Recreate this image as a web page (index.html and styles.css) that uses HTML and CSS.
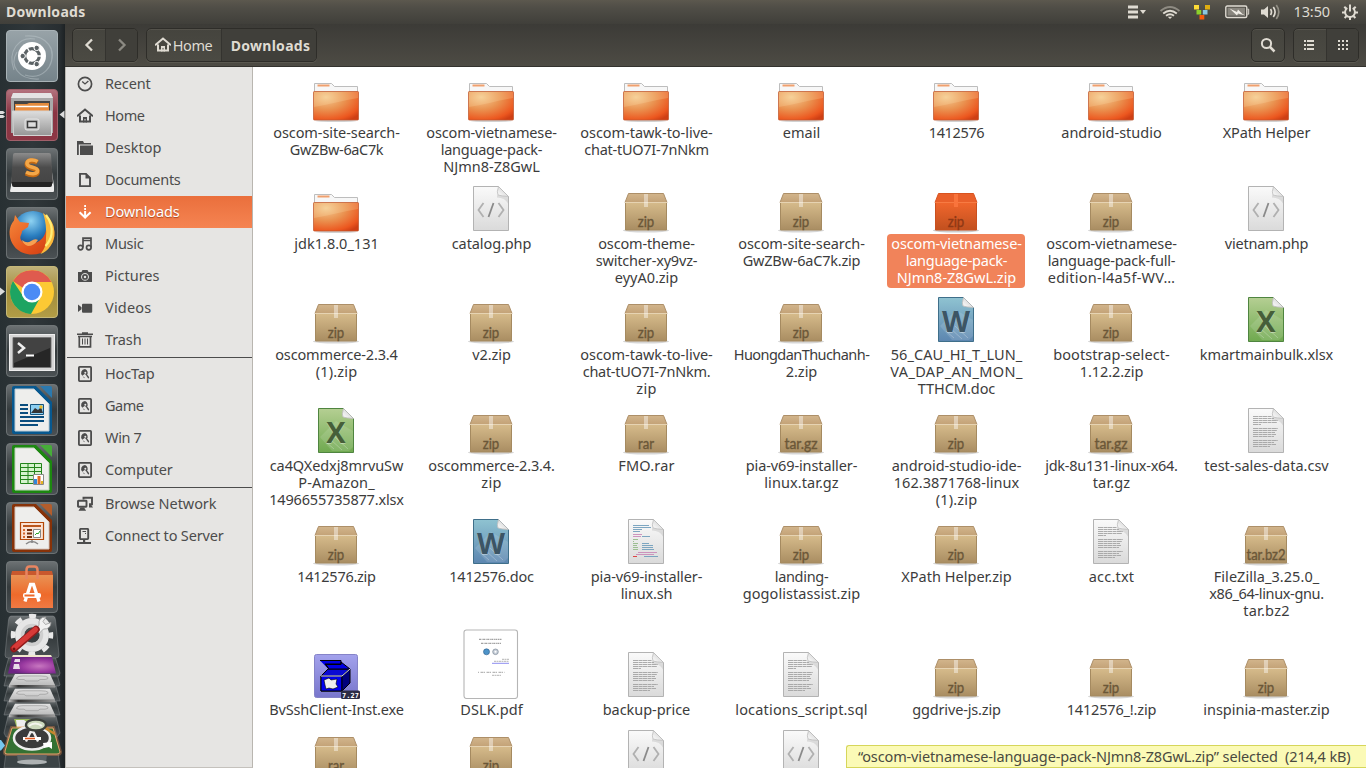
FILE: index.html
```html
<!DOCTYPE html>
<html lang="en">
<head>
<meta charset="utf-8">
<title>Downloads</title>
<link rel="stylesheet" href="styles.css">
</head>
<body>
<svg class="defs" aria-hidden="true">
  <defs>
    <linearGradient id="gTile" x1="0" y1="0" x2="0" y2="1"><stop offset="0" stop-color="#6d7274"/><stop offset=".28" stop-color="#4a5052"/><stop offset=".5" stop-color="#353b3d"/><stop offset="1" stop-color="#4b5154"/></linearGradient>
    <linearGradient id="gDash" x1="0" y1="0" x2="0" y2="1"><stop offset="0" stop-color="#98a3a8"/><stop offset="1" stop-color="#75838a"/></linearGradient>
    <linearGradient id="gRed" x1="0" y1="0" x2="0" y2="1"><stop offset="0" stop-color="#b4747f"/><stop offset=".45" stop-color="#8a3543"/><stop offset="1" stop-color="#8c3644"/></linearGradient>
    <linearGradient id="gGold" x1="0" y1="0" x2="0" y2="1"><stop offset="0" stop-color="#c0b27a"/><stop offset=".5" stop-color="#a28d3c"/><stop offset="1" stop-color="#b29d46"/></linearGradient>
    <linearGradient id="gMetal" x1="0" y1="0" x2="0" y2="1"><stop offset="0" stop-color="#dedede"/><stop offset="1" stop-color="#969696"/></linearGradient>
    <linearGradient id="gKey" x1="0" y1="0" x2="0" y2="1"><stop offset="0" stop-color="#8c8c8c"/><stop offset=".45" stop-color="#4c4c4c"/><stop offset="1" stop-color="#444"/></linearGradient>
    <linearGradient id="gDisk" x1="0" y1="0" x2="0" y2="1"><stop offset="0" stop-color="#e2e2e2"/><stop offset="1" stop-color="#bcbcbc"/></linearGradient>
    <linearGradient id="gEdge" x1="0" y1="0" x2="1" y2="0"><stop offset="0" stop-color="#bbb"/><stop offset=".2" stop-color="#333"/><stop offset=".5" stop-color="#555"/><stop offset="1" stop-color="#999"/></linearGradient>
    <radialGradient id="gGlobe" cx=".45" cy=".25" r=".75"><stop offset="0" stop-color="#8fd3f2"/><stop offset=".5" stop-color="#2b7fc0"/><stop offset="1" stop-color="#0b2c66"/></radialGradient>
    <linearGradient id="gFox" x1="0" y1="0" x2="1" y2="1"><stop offset="0" stop-color="#f58a3c"/><stop offset=".6" stop-color="#e4551d"/><stop offset="1" stop-color="#c93a12"/></linearGradient>
    <linearGradient id="gBag" x1="0" y1="0" x2="0" y2="1"><stop offset="0" stop-color="#e99254"/><stop offset=".6" stop-color="#ee6a2b"/><stop offset="1" stop-color="#f07a44"/></linearGradient>
    <linearGradient id="gPaper" x1="0" y1="0" x2="0" y2="1"><stop offset="0" stop-color="#fafafa"/><stop offset="1" stop-color="#dadada"/></linearGradient>
    <linearGradient id="gFold" x1="0" y1="1" x2="1" y2="0"><stop offset="0" stop-color="#fff"/><stop offset=".6" stop-color="#ddd"/><stop offset="1" stop-color="#bbb"/></linearGradient>
    <radialGradient id="gFolder" cx=".28" cy=".2" r=".95"><stop offset="0" stop-color="#f4cb92"/><stop offset=".45" stop-color="#ea9351"/><stop offset=".85" stop-color="#ec571f"/><stop offset="1" stop-color="#cf3f14"/></radialGradient>
    <linearGradient id="gBox" x1="0" y1="0" x2="0" y2="1"><stop offset="0" stop-color="#d6bb8b"/><stop offset="1" stop-color="#a98d62"/></linearGradient>
    <linearGradient id="gLid" x1="0" y1="0" x2="0" y2="1"><stop offset="0" stop-color="#d2b58c"/><stop offset="1" stop-color="#c3a277"/></linearGradient>
    <linearGradient id="gBoxSel" x1="0" y1="0" x2="0" y2="1"><stop offset="0" stop-color="#f0662c"/><stop offset="1" stop-color="#c1501f"/></linearGradient>
    <linearGradient id="gDoc" x1="0" y1="0" x2="0" y2="1"><stop offset="0" stop-color="#8fc3d1"/><stop offset="1" stop-color="#5c86b0"/></linearGradient>
    <linearGradient id="gXls" x1="0" y1="0" x2="0" y2="1"><stop offset="0" stop-color="#b5cf93"/><stop offset="1" stop-color="#6fa94f"/></linearGradient>
    <linearGradient id="gExe" x1="0" y1="0" x2="0" y2="1"><stop offset="0" stop-color="#a3a2ec"/><stop offset="1" stop-color="#7876cc"/></linearGradient>
    <radialGradient id="gPurple" cx=".65" cy=".55" r=".6"><stop offset="0" stop-color="#c877c0"/><stop offset=".6" stop-color="#9a3aa0"/><stop offset="1" stop-color="#6d2484"/></radialGradient>

    <symbol id="frame" viewBox="0 0 52 52"><rect x=".5" y=".5" width="51" height="51" rx="3.500" fill="url(#gTile)" stroke="#7c8183" stroke-opacity=".75"/></symbol>

    <symbol id="folder" viewBox="0 0 48 48">
      <ellipse cx="24" cy="46.800" rx="21" ry="1.200" fill="#000" opacity=".18"/>
      <path d="M2.500 20V9.500h17l3 3h23V20z" fill="#f7f7f7" stroke="#bdbdbd"/>
      <path d="M5.500 10.500h12v2h-12z" fill="#f0a06e"/>
      <rect x="1.500" y="17.500" width="45" height="28.500" rx=".8" fill="url(#gFolder)" stroke="#c05a30" stroke-opacity=".75"/>
      <path d="M2 18h44v6C32 26 16 31 2 33z" fill="#ffe9b8" opacity=".2"/>
    </symbol>
    <symbol id="box" viewBox="0 0 48 48">
      <ellipse cx="24" cy="45.500" rx="23" ry="2" fill="#000" opacity=".16"/>
      <path d="M6.500 8.500h35l3.500 9H3z" fill="url(#gLid)" stroke="#ad8f68"/>
      <path d="M3.500 17.500h41v27.500h-41z" fill="url(#gBox)" stroke="#a58a60"/>
      <path d="M3 17.500h42" stroke="#e6d3b2"/>
      <path d="M22 9h4v13h-4z" fill="#fff" opacity=".42"/>
    </symbol>
    <symbol id="boxsel" viewBox="0 0 48 48">
      <ellipse cx="24" cy="45.500" rx="23" ry="2" fill="#000" opacity=".2"/>
      <path d="M6.500 8.500h35l3.500 9H3z" fill="#e9602a" stroke="#d8531f"/>
      <path d="M3.500 17.500h41v27.500h-41z" fill="url(#gBoxSel)" stroke="#c9501f"/>
      <path d="M3 17.500h42" stroke="#f77b43"/>
      <path d="M22 9h4v13h-4z" fill="#f9743c"/>
    </symbol>
    <symbol id="page" viewBox="0 0 48 48">
      <path d="M6.500 1.500h25l10 10v34h-35z" fill="url(#gPaper)" stroke="#b3b3b3"/>
      <path d="M30 10l11 1.500v7q-3-6-11-6z" fill="#888" opacity=".22"/>
      <path d="M31.500 1.500q-2 6-.5 8.500 3 1 10.500 1.500z" fill="url(#gFold)" stroke="#bbb" stroke-width=".8"/>
    </symbol>
    <symbol id="lines" viewBox="0 0 48 48">
      <path d="M11 9.500h19M11 11.500h21M11 13.500h25M11 15.500h24M11 17.500h8M11 21.500h25M11 23.500h24M11 25.500h22M11 27.500h23M11 29.500h21M11 33.500h25M11 35.500h21M11 37.500h23M11 39.500h17" stroke="#a3a3a3" stroke-dasharray="5 .5 3.500 .4" stroke-width=".9"/>
    </symbol>

    <symbol id="s-clock" viewBox="0 0 16 16"><circle cx="8" cy="8" r="6.600" fill="none" stroke="currentColor" stroke-width="1.700"/><path d="M5.200 5.500L8 8l3.400-3" fill="none" stroke="currentColor" stroke-width="1.300"/></symbol>
    <symbol id="s-home" viewBox="0 0 16 16"><path d="M0 8.300L8 1.600l8 6.700M3 7.500v6h10v-6" fill="none" stroke="currentColor" stroke-width="2"/><path d="M6 14.500V9h4v5.500H8.500V11h-1v3.500z" fill="currentColor"/></symbol>
    <symbol id="s-desk" viewBox="0 0 16 16"><path d="M0 1h6l1 2h7v1.500H1.800V15H0z" fill="currentColor"/><path d="M3 5.500h13V15H3z" fill="currentColor"/></symbol>
    <symbol id="s-doc" viewBox="0 0 16 16"><path d="M3 1.900h6l4 4v8.200H3z" fill="none" stroke="currentColor" stroke-width="1.900"/><path d="M8.500 1v5.500H14z" fill="currentColor"/></symbol>
    <symbol id="s-down" viewBox="0 0 16 16"><path d="M7.200 1h1.800v2H7.200zM7.200 4h1.800v2H7.200z" fill="currentColor"/><path d="M8.100 7v6.500M2.600 8.300l5.500 5.200 5.500-5.200" fill="none" stroke="currentColor" stroke-width="2"/></symbol>
    <symbol id="s-music" viewBox="0 0 16 16"><path d="M6 11.500V2.200h8v9.300M6 4.500h8" fill="none" stroke="currentColor" stroke-width="1.700"/><circle cx="3.500" cy="11.600" r="2.300" fill="none" stroke="currentColor" stroke-width="1.700"/><circle cx="11.800" cy="11.600" r="2.300" fill="none" stroke="currentColor" stroke-width="1.700"/></symbol>
    <symbol id="s-pic" viewBox="0 0 16 16"><path fill-rule="evenodd" d="M1 4h3.500l1-2h5l1 2H15v10H1zM8 5a3.900 3.900 0 1 0 .01 0z" fill="currentColor"/><circle cx="8" cy="8.900" r="2.100" fill="none" stroke="currentColor" stroke-width="1.700"/></symbol>
    <symbol id="s-video" viewBox="0 0 16 16"><rect x="5" y="3.700" width="10.200" height="9" rx="1" fill="currentColor"/><path d="M1 4.500l3.500 2.800v2L1 12z" fill="currentColor"/></symbol>
    <symbol id="s-trash" viewBox="0 0 16 16"><path d="M0 2.200h16M5 1h6" stroke="currentColor" stroke-width="1.500" fill="none"/><path d="M2.300 5v9.800h11.200V5M1 4.500h14" fill="none" stroke="currentColor" stroke-width="1.700"/><path d="M5.500 6.500v6M8 6.500v6M10.500 6.500v6" stroke="currentColor"/></symbol>
    <symbol id="s-disk" viewBox="0 0 16 16"><rect x="1.900" y=".9" width="12.200" height="14.200" rx=".8" fill="none" stroke="currentColor" stroke-width="1.800"/><path d="M8 3a3.900 3.900 0 0 0-2.600 6.800L7.500 8l2.200 1.300A3.900 3.900 0 0 0 8 3zM8.800 9l1.500-.3 1.900 2.600-.8 1.500z" fill="currentColor"/><path d="M5.600 10.300l1.900 1-.2 1z" fill="currentColor"/><circle cx="8.300" cy="6.800" r="1" fill="#e6e5e3"/></symbol>
    <symbol id="s-net" viewBox="0 0 16 16"><path d="M6.500 3.500V1.800H15v6.500h-3" fill="none" stroke="currentColor" stroke-width="1.900"/><rect x="1" y="4.800" width="8.500" height="6" rx=".5" fill="none" stroke="currentColor" stroke-width="1.900"/><path d="M3.500 11.500h3.600l2 3.300H1.500zM12 8.500h2l2 3h-4z" fill="currentColor"/></symbol>
    <symbol id="s-server" viewBox="0 0 16 16"><rect x="3" y=".9" width="8.200" height="10.200" rx=".8" fill="none" stroke="currentColor" stroke-width="1.900"/><path d="M5.500 3.500h3.500M8 5.500h1" stroke="currentColor"/><path d="M6 12h2.200v2H14v2H0v-2h6z" fill="currentColor"/></symbol>
  </defs>
</svg>

<header class="panel">
  <span class="panel-title" data-w="79">Downloads</span>
  <div class="indicators">
    <svg class="i-keys" width="19" height="16" viewBox="0 0 19 16"><path d="M0 3h10M0 8h10M0 13h10" stroke="#dfdbd2" stroke-width="2.800"/><path d="M12 6h6l-3 4z" fill="#dfdbd2"/></svg>
    <svg class="i-wifi" width="22" height="16" viewBox="0 0 22 16" fill="none" stroke-width="1.900"><path d="M1.500 7q9.500-8 19 0" stroke="#8e8b82"/><path d="M4.200 9.400q6.800-5.500 13.600 0" stroke="#dfdbd2"/><path d="M7 11.800q4-3 8 0" stroke="#dfdbd2"/><path d="M8.700 12.800h4.600L11 15z" fill="#dfdbd2"/></svg>
    <svg class="i-blocks" width="17" height="16" viewBox="0 0 17 16"><path d="M0 1h5v4.500H0z" fill="#fcdb36"/><path d="M11 1h5v4.500h-5z" fill="#dfae10"/><path d="M2.500 6h4.700v4.500H2.500z" fill="#8dd12b"/><path d="M8.800 6h4.700v4.500H8.800z" fill="#89c6e0"/><path d="M5.500 11h4.800v4.500H5.500z" fill="#f75a0b"/></svg>
    <svg class="i-batt" width="25" height="14" viewBox="0 0 25 14"><rect x=".8" y="1" width="21" height="11.500" rx="1.500" fill="none" stroke="#dfdbd2" stroke-width="1.400"/><path d="M2.500 2.700h17.500v8H2.500z" fill="#89867e"/><path d="M22.500 4.200h1.200v5h-1.200" fill="none" stroke="#dfdbd2"/><path d="M4.500 3.500l7.500 3.500 1-2.500 4.500 4.500 3 1.500-7.500-2-1 2z" fill="#f0ede6"/></svg>
    <svg class="i-vol" width="20" height="16" viewBox="0 0 20 16" fill="none" stroke-width="1.700"><path d="M0 5.500h3l4-3.500v12l-4-3.500H0z" fill="#dfdbd2"/><path d="M9.500 5q2 3 0 6" stroke="#dfdbd2"/><path d="M12.300 3q3.600 5 0 10" stroke="#dfdbd2"/><path d="M15.300 1q5 7 0 14" stroke="#918e84"/></svg>
    <span class="clock" data-w="36">13:50</span>
    <svg class="i-gear" width="16" height="16" viewBox="0 0 16 16" fill="none" stroke="#dfdbd2"><path d="M5.300 4a4.900 4.900 0 1 0 5.400 0" stroke-width="1.900"/><path d="M8 .5v7" stroke-width="2"/><path d="M0 8.500h3M13 8.500h3M8 13v3M2.300 2.800l2 2M13.700 2.800l-2 2M2.600 14l2-2M13.400 14l-2-2" stroke-width="2"/></svg>
  </div>
</header>

<div class="desktop">
  <nav class="launcher">
    <svg width="65" height="59" viewBox="0 0 65 59">
      <rect x="6.500" y=".5" width="51" height="51" rx="3.500" fill="url(#gDash)" stroke="#a8b2b6"/>
      <g fill="none" stroke="#bcc6ca" stroke-opacity=".5" stroke-width="1.200"><path d="M14 40C7 21 19 6 35 9M25 6c22-2 33 14 24 31M51 18c5 20-10 32-26 27M39 49C18 50 9 35 17 22"/></g>
      <circle cx="32" cy="26" r="14" fill="#fff"/>
      <circle cx="32" cy="26" r="7.300" fill="none" stroke="#5b6265" stroke-width="3.200"/>
      <g stroke="#fff" stroke-width="1.500"><path d="M32 26h12M32 26l-6-10.500M32 26l-6 10.500"/></g><circle cx="32" cy="26" r="5.200" fill="#fff"/>
      <g fill="#5b6265" stroke="#fff"><circle cx="22.700" cy="26" r="2.700"/><circle cx="36.700" cy="17.900" r="2.700"/><circle cx="36.700" cy="34.100" r="2.700"/></g>
    </svg>
    <svg width="65" height="59" viewBox="0 0 65 59">
      <rect x="6.500" y=".5" width="51" height="51" rx="3.500" fill="url(#gRed)" stroke="#a2606a"/>
      <path d="M0 22h3l2 1.500L3 25H0zM0 26h3l2 1.500L3 29H0z" fill="#dcdcdc"/><path d="M59.500 25.500l5-4v8z" fill="#dcdcdc"/>
      <path d="M13 4h38l2 6v34H11V10z" fill="#a9a9a9"/><path d="M13 4h38l2 5H11z" fill="#e4e4e4"/>
      <path d="M14 12h36v10H14z" fill="#444"/><path d="M15 15h12l2-1h20v9H15z" fill="#e48b3c"/><path d="M16 17.500h32" stroke="#fff" stroke-width="1.500"/><path d="M16 19h33v3H16z" fill="#ed8d3e"/>
      <path d="M12.500 22h39v24.500h-38z" fill="url(#gMetal)" stroke="#d4d4d4"/>
      <rect x="25" y="30" width="14" height="11" rx="2" fill="#c4c4c4" stroke="#e5e5e5"/><rect x="27.500" y="32.500" width="9" height="6" fill="#ddd" stroke="#3c3c3c" stroke-width="1.500"/>
    </svg>
    <svg width="65" height="59" viewBox="0 0 65 59">
      <use href="#frame" x="6" y="0" width="52" height="52"/>
      <path d="M11 38l3-28h36l4 28v5q0 1-1 1H11q-1 0-1-1z" fill="#ececec"/><path d="M15 5h34q2 0 2 2l2 28-2 2H13l-2-2 2-28q0-2 2-2z" fill="url(#gKey)"/><path d="M12 34h40v3q0 2-2 2H14q-2 0-2-2z" fill="#242424"/>
      <path d="M37.500 14.500c-4-2.500-10.500-2-10.500 2 0 4.500 10.500 3 10.500 7 0 4-7 4-11.500 1.500" fill="none" stroke="#c56a12" stroke-width="5"/><path d="M37.500 13.500c-4-2.500-10.500-2-10.500 2 0 4.500 10.500 3 10.500 7 0 4-7 4-11.500 1.500" fill="none" stroke="#f4a748" stroke-width="3.600"/>
    </svg>
    <svg width="65" height="59" viewBox="0 0 65 59">
      <use href="#frame" x="6" y="0" width="52" height="52"/>
      <circle cx="33" cy="24" r="20" fill="url(#gGlobe)"/>
      <path d="M45 8q10 8 9.500 20C53 40 44 47.500 32 47.500 19 47.500 9.500 38 9.500 25q.5-7 4.500-11.500L15 8l5 7 9 1-1 4-6 4c0 4-3 5-1 9 3 4 8 5 13 3 6-1 11-6 12-13 1-6 1-10-1-15z" fill="url(#gFox)"/>
      <path d="M43 6q8 5 10.500 13 3 12-3 20-4 6-10 8 6-7 5.500-16 1-13-3-25z" fill="#f8b93c"/><path d="M46 8q7 9 5.500 19-1 7-6 12" fill="none" stroke="#ffee78" stroke-width="2.200"/>
      <path d="M22 33q5 4 9 1 4-3 7-1-4 6-10 6-5-2-6-6z" fill="#f7a052"/>
    </svg>
    <svg width="65" height="59" viewBox="0 0 65 59">
      <rect x="6.500" y=".5" width="51" height="51" rx="3.500" fill="url(#gGold)" stroke="#c5b878"/>
      <path d="M0 21.500l5 4-5 4z" fill="#dcdcdc"/>
      <circle cx="32" cy="26" r="22" fill="#fcc934"/>
      <path d="M13 15A22 22 0 0 1 51.500 16H32a10 10 0 0 0-9 6z" fill="#df5b4e"/>
      <path d="M13 15A22 22 0 0 0 31 48l9.500-17a10 10 0 0 1-17.500-1z" fill="#1da462"/>
      <circle cx="32" cy="26" r="10.500" fill="#fff"/><circle cx="32" cy="26" r="8.300" fill="#4c8bf5"/>
    </svg>
    <svg width="65" height="59" viewBox="0 0 65 59">
      <use href="#frame" x="6" y="0" width="52" height="52"/>
      <rect x="9.500" y="9.500" width="45" height="36" fill="#d6d6d6" stroke="#eee"/><path d="M13 12.500h38v30H13z" fill="#262626" stroke="#777"/><path d="M14 13h36v10L14 38z" fill="#fff" opacity=".13"/>
      <path d="M18 18l6 5-6 5" fill="none" stroke="#eee" stroke-width="2.500"/><path d="M26 30.500h8" stroke="#fff" stroke-width="2"/>
    </svg>
    <svg width="65" height="59" viewBox="0 0 65 59">
      <use href="#frame" x="6" y="0" width="52" height="52"/>
      <path d="M14 2h22l16 16v30q0 2-2 2H14q-2 0-2-2V4q0-2 2-2z" fill="#07588f"/><path d="M40 2h10q2 0 2 2v10z" fill="#2b79ae"/>
      <path d="M15 5h19l15 15v27H15z" fill="#eeeeec" stroke="#bdcbd3"/>
      <path d="M20 21h8M20 25h8M20 29h8M20 33h24M20 37h24M20 41h18" stroke="#0a4d7e" stroke-width="2"/><path d="M30.500 20.500h13v10h-13z" fill="#8ccff2" stroke="#16537c"/><path d="M31 29l4-5 3 2 3-3 2 6z" fill="#333"/><circle cx="41" cy="23" r="1.700" fill="#ebb928"/>
    </svg>
    <svg width="65" height="59" viewBox="0 0 65 59">
      <use href="#frame" x="6" y="0" width="52" height="52"/>
      <path d="M14 2h22l16 16v30q0 2-2 2H14q-2 0-2-2V4q0-2 2-2z" fill="#1c8810"/><path d="M40 2h10q2 0 2 2v10z" fill="#46ad38"/>
      <path d="M15 5h19l15 15v27H15z" fill="#eeeeec" stroke="#c1d3be"/>
      <path d="M20.500 20.500h21v20h-21z" fill="#d5f3cd" stroke="#22831a"/><path d="M21 24.500h20M21 28.500h20M21 32.500h20M21 36.500h20M28 21v19M34.500 21v19" stroke="#22831a"/>
      <path d="M33.500 31.500h10v10h-10z" fill="#fff" stroke="#888"/><path d="M34 36h3v5h-3z" fill="#3187d9"/><path d="M37.500 33h3v8h-3z" fill="#df6a20"/><path d="M41 38h2v3h-2z" fill="#e4b522"/>
    </svg>
    <svg width="65" height="59" viewBox="0 0 65 59">
      <use href="#frame" x="6" y="0" width="52" height="52"/>
      <path d="M14 2h22l16 16v30q0 2-2 2H14q-2 0-2-2V4q0-2 2-2z" fill="#873208"/><path d="M40 2h10q2 0 2 2v10z" fill="#b35d2c"/>
      <path d="M15 5h19l15 15v27H15z" fill="#eeeeec" stroke="#d6c7bf"/>
      <path d="M20.500 20.500h23v17h-23z" fill="#fbe2d4" stroke="#b34708" stroke-width="1.200"/><path d="M23 24h18" stroke="#b34708" stroke-width="1.800"/><path d="M23 28h2M23 31.500h2M23 35h2" stroke="#d4662e" stroke-width="2"/><path d="M27 28h5M27 31.500h5M27 35h5" stroke="#73300f" stroke-width="2"/><path d="M33.500 27.500h7v8h-7z" fill="#fff" stroke="#888"/><path d="M35 33l2-2 1 1 2-3" fill="none" stroke="#2da32d"/><path d="M32 38v3M26 42q6-5 12 0" fill="none" stroke="#888" stroke-width="1.500"/>
    </svg>
    <svg width="65" height="52" viewBox="0 0 65 52">
      <use href="#frame" x="6" y="0" width="52" height="52"/>
      <path d="M12 10h40l1 4v33H11V14z" fill="#c9582d"/><path d="M11 14h42v33H11z" fill="url(#gBag)"/><path d="M26.500 18V9q0-3.500 3-3.500h5q3 0 3 3.500v9" fill="none" stroke="#e88561" stroke-width="2.500"/>
      <path d="M25 40.500l5.500-17h3l5.500 17" fill="none" stroke="#fff" stroke-width="3.300"/><rect x="23" y="32" width="18" height="5" rx="2" fill="#fff"/><path d="M24.500 33.500h10v2h-10z" fill="#ee6a2b"/>
    </svg>
    <svg width="65" height="155" viewBox="0 0 65 155">
      <g stroke="#8b9092" stroke-opacity=".45" fill="url(#gTile)">
        <path d="M8 124h48l4 31H4z" fill="#3c4446"/>
        <path d="M8 103h48l4 17-3 4H6l-2-4z"/><path d="M8 88h48l4 14H4z"/><path d="M8 73h48l4 15H4z"/><path d="M8 58h48l4 14-1 1H4z"/><path d="M10 40h44l6 20-1 3H4l1-5z"/>
        <path d="M11 3h42q2 0 2.500 4L59 42q0 3-3 3H8q-3 0-3-3L8.500 7Q9 3 11 3z"/>
      </g>
      <circle cx="32" cy="22" r="19" fill="none" stroke="#e8e8e8" stroke-width="4.500" stroke-dasharray="7 7.920" stroke-dashoffset="3.500"/><circle cx="32" cy="22" r="12.500" fill="none" stroke="#e6e6e6" stroke-width="9"/><circle cx="32" cy="22" r="9.500" fill="none" stroke="#cfcfcf" stroke-width="3.500"/>
      <path d="M36 17l3-5q-1-8 7-8l-3 4.500 2.500 3 5.500-2q-.5 7-7.500 6.500l-4 4z" fill="#f1f1f1" stroke="#9c9c9c" stroke-width=".8"/><path d="M14 35.500l22-19" stroke="#8f1b1b" stroke-width="7.500" stroke-linecap="round"/><path d="M14 35l21.500-18.500" stroke="#d63a38" stroke-width="5" stroke-linecap="round"/><circle cx="14" cy="36" r="1.500" fill="#701313"/>
      <path d="M13 42h38l1 2H12z" fill="#f1e7ce"/><path d="M12 44h40l4 16.500H8z" fill="url(#gPurple)"/><path d="M15 46h5v3h-6zM14 51h5l1 5h-7z" fill="#e8dbe8"/>
      <g id="drive"><path d="M15 61h35l5 11H9z" fill="url(#gDisk)"/><path d="M9 72h46v2.500H9z" fill="url(#gEdge)"/><path d="M17 64.500q1-1.500 6-1.500h18q6 0 7 1.500t-3 2h-5l-2 1.500H26l-2-1.500h-5q-4-.5-2-2z" fill="none" stroke="#a2a2a2" stroke-width=".8"/></g>
      <use href="#drive" y="14.800"/><use href="#drive" y="29.700"/>
      <path d="M14 106h26l4 10H17z" fill="#9ab858"/><path d="M16 107h8l4 3-5 4h-6z" fill="#eee"/><path d="M12 115h41l7 24q0 2-3 2H7q-3 0-2-3z" fill="#f0924c" opacity=".35" stroke="#f0924c" stroke-width="4"/>
      <path d="M12 115h41l7 24q0 2-3 2H7q-3 0-2-3z" fill="#347133" stroke="#e8a06a" stroke-width="1"/>
      <ellipse cx="32" cy="125" rx="18" ry="11.500" fill="#3b3b3b" stroke="#eee" stroke-width="2.500"/><path d="M43 130l9-1v7l-3-2-5 1z" fill="#fff"/><path d="M26 128.500l4.500-9.500h3l4.500 9.500" fill="none" stroke="#eee" stroke-width="2.300"/><path d="M23 125.500h18" stroke="#fff" stroke-width="3"/><path d="M25 125.500h10" stroke="#e15a21" stroke-width="1.600"/>
      <path d="M45 115l10 6" stroke="#c8872e" stroke-width="2.500"/><ellipse cx="36" cy="112" rx="10" ry="5.500" fill="#cdd9bd" stroke="#3d403b" stroke-width="2.300"/><path d="M29 113q6-5 13 0" fill="none" stroke="#f4f4ee" stroke-width="2"/>
      <path d="M17 142h30l-1 7H18z" fill="#5a6264"/><ellipse cx="32" cy="149" rx="15" ry="2.500" fill="#aeb2b3"/><path d="M0 127h1l4 5.500-4 5H0z" fill="#76c7ef"/>
    </svg>
  </nav>

  <main class="window">
    <div class="toolbar">
      <div class="group">
        <span class="btn nav"><svg width="12" height="14" viewBox="0 0 12 14"><path d="M9 1.500L3.500 7 9 12.500" fill="none" stroke="#dfdbd2" stroke-width="2.300"/></svg></span>
        <span class="btn nav off"><svg width="12" height="14" viewBox="0 0 12 14"><path d="M3 1.500L8.500 7 3 12.500" fill="none" stroke="#8c8a83" stroke-width="2.300"/></svg></span>
      </div>
      <div class="group path">
        <span class="btn crumb"><svg width="16" height="16"><use href="#s-home"/></svg><span data-w="39">Home</span></span>
        <span class="btn crumb on"><span data-w="79">Downloads</span></span>
      </div>
      <div class="group search"><span class="btn"><svg width="16" height="16" viewBox="0 0 16 16"><circle cx="6.500" cy="6.500" r="4.600" fill="none" stroke="#dfdbd2" stroke-width="2"/><path d="M10 10l4.500 4.500" stroke="#dfdbd2" stroke-width="2.500"/></svg></span></div>
      <div class="group">
        <span class="btn view list"><svg width="10" height="10" viewBox="0 0 10 10"><path d="M0 1h2M3 1h7M0 5h2M3 5h7M0 9h2M3 9h7" stroke="#dfdbd2" stroke-width="2"/></svg></span>
        <span class="btn view on"><svg width="10" height="10" viewBox="0 0 10 10"><path d="M0 1h10M0 5h10M0 9h10" stroke="#dfdbd2" stroke-width="2" stroke-dasharray="2 2"/></svg></span>
      </div>
    </div>
    <div class="content">
      <aside class="sidebar">
        <div class="place"><svg><use href="#s-clock"/></svg><span data-w="45">Recent</span></div>
        <div class="place"><svg><use href="#s-home"/></svg><span data-w="39">Home</span></div>
        <div class="place"><svg><use href="#s-desk"/></svg><span data-w="56">Desktop</span></div>
        <div class="place"><svg><use href="#s-doc"/></svg><span data-w="75">Documents</span></div>
        <div class="place active"><svg><use href="#s-down"/></svg><span data-w="74">Downloads</span></div>
        <div class="place"><svg><use href="#s-music"/></svg><span data-w="38">Music</span></div>
        <div class="place"><svg><use href="#s-pic"/></svg><span data-w="54">Pictures</span></div>
        <div class="place"><svg><use href="#s-video"/></svg><span data-w="46">Videos</span></div>
        <div class="place"><svg><use href="#s-trash"/></svg><span data-w="36">Trash</span></div>
        <div class="rule"></div>
        <div class="place"><svg><use href="#s-disk"/></svg><span data-w="49">HocTap</span></div>
        <div class="place"><svg><use href="#s-disk"/></svg><span data-w="38">Game</span></div>
        <div class="place"><svg><use href="#s-disk"/></svg><span data-w="36">Win 7</span></div>
        <div class="place"><svg><use href="#s-disk"/></svg><span data-w="67">Computer</span></div>
        <div class="rule"></div>
        <div class="place"><svg><use href="#s-net"/></svg><span data-w="111">Browse Network</span></div>
        <div class="place"><svg><use href="#s-server"/></svg><span data-w="118">Connect to Server</span></div>
      </aside>
      <section class="files" id="files"></section>
    </div>
    <div class="status"><span data-w="492">“oscom-vietnamese-language-pack-NJmn8-Z8GwL.zip” selected&nbsp; (214,4 kB)</span></div>
  </main>
</div>
<script src="files.js"></script>
</body>
</html>
```

FILE: styles.css
```css
* { box-sizing: border-box; }
body {
  margin: 0;
  width: 1366px;
  height: 768px;
  overflow: hidden;
  display: flex;
  flex-direction: column;
  font: 14.5px/17px "Noto Sans", "Open Sans", sans-serif;
  color: #3c3c3c;
  background: #fff;
}
svg { display: block; flex: none; }
.defs { position: absolute; width: 0; height: 0; }
[data-w] { display: inline-block; white-space: pre; }

.panel {
  flex: none;
  height: 24px;
  display: flex;
  align-items: center;
  justify-content: space-between;
  padding: 0 8px 0 6px;
  color: #dfdbd2;
  background: linear-gradient(#5c584e 0, #504e47 30%, #403f3a 100%);
}
.panel-title { font-weight: 700; font-size: 14px; margin-top: -2px; }
.indicators { display: flex; align-items: center; }
.i-wifi { margin-left: 12px; }
.i-blocks { margin-left: 13px; }
.i-batt { margin-left: 14px; }
.i-vol { margin-left: 11px; }
.clock { margin: -1px 0 0 13px; }
.i-gear { margin-left: 12px; }

.desktop { flex: 1; min-height: 0; display: flex; }
.launcher {
  flex: none;
  width: 65px;
  padding-top: 6px;
  overflow: hidden;
  background: linear-gradient(90deg, #283033, #30373a 50%, #282e31 92%, #1d2224);
}
.window { flex: 1; min-width: 0; display: flex; flex-direction: column; }
.toolbar {
  flex: none;
  height: 43px;
  display: flex;
  align-items: flex-start;
  gap: 8px;
  padding: 4px 7px 0;
  color: #dfdbd2;
  background: linear-gradient(#3c3b37, #4d4b44);
  border-bottom: 1px solid #33322e;
}
.group {
  display: flex;
  height: 34px;
  border: 1px solid #2e2d29;
  border-radius: 5px;
  background: linear-gradient(#45443e, #4b4a43);
  box-shadow: 0 1px 0 #5a5850, inset 0 1px 0 #54524b;
  overflow: hidden;
}
.btn { display: flex; align-items: center; justify-content: center; width: 32px; }
.btn + .btn { border-left: 1px solid #34332f; }
.btn.off, .btn.on { background: #403f3a; }
.crumb { gap: 2px; width: 74px; padding-right: 1px; }
.crumb.on { width: 95px; font-weight: 700; font-size: 14px; padding: 0 0 0 3px; }
.search { margin-left: auto; }
.list { padding-right: 2px; }

.content { flex: 1; min-height: 0; display: flex; }
.sidebar {
  flex: none;
  width: 188px;
  padding-top: 1px;
  color: #4c4c4c;
  background: #e6e5e3;
  border-left: 1px solid #b9b6b0;
  border-right: 1px solid #b9b6b0;
  border-bottom: 1px solid #c4c1bc;
}
.place { height: 32px; display: flex; align-items: center; gap: 12px; padding-left: 11px; }
.place svg { width: 16px; height: 16px; margin-top: -1px; }
.place span { margin-top: -2px; }
.place.active { color: #fff; background: linear-gradient(#ea6f3c, #f58452); text-shadow: 0 1px 1px #a5451f; }
.rule { height: 1px; margin: 1px 0 0 1px; background: #4c4c4c; }

.files { flex: 1; min-width: 0; padding: 7px 0 0 5px; overflow: hidden; }
.row { display: flex; padding-bottom: 8px; }
.file { flex: none; width: 155px; display: flex; flex-direction: column; align-items: center; }
.art { height: 48px; display: flex; align-items: flex-end; margin-bottom: 1px; }
.tall .art { height: 70px; }
.row.tall { padding-bottom: 9px; }
.name {
  display: flex;
  flex-direction: column;
  align-items: center;
  padding: 1px 3px 2px 5px;
  border-radius: 4px;
}
.name.sel { color: #fff; background: #f1835a; width: 138px; }
.ext { font-family: Lato, sans-serif; font-weight: 400; fill: #6b5738; stroke: #6b5738; stroke-width: .35px; }
.ext-sel { fill: #8f3815; stroke: #8f3815; }
.big { font-family: "Open Sans", sans-serif; font-weight: 700; }

.status {
  position: absolute;
  right: 0;
  bottom: 0;
  width: 520px;
  height: 23px;
  padding: 2px 0 0 11px;
  white-space: pre;
  color: #4a4a40;
  background: #fbfab6;
  border: 1px solid #d6d65a;
  border-width: 1px 0 1px 1px;
  border-radius: 3px 0 0 0;
}
```

FILE: files.js
```js
const use = (id) => `<use href="#${id}" width="48" height="48"/>`;
const svg = (body, w = 48, h = 48) => `<svg width="${w}" height="${h}" viewBox="0 0 ${w} ${h}">${body}</svg>`;
const label = (ext, w, cls = 'ext') =>
  `<text class="${cls}" x="24" y="41.500" font-size="14.500" text-anchor="middle" textLength="${w}" lengthAdjust="spacingAndGlyphs">${ext}</text>`;
const archive = (ext, w) => svg(use('box') + label(ext, w));
const office = (grad, edge, ink, letter) => svg(
  `<path d="M6.500 1.500h25l10 10v34h-35z" fill="url(#${grad})" stroke="${edge}"/>
   <path d="M8 30l16-16 17 10v16l-4 4H20z" fill="#fff" opacity=".12"/>
   <path d="M14 35l8 7M18 32l12 11M23 30l13 12" stroke="#fff" opacity=".25"/>
   <path d="M31.500 1.500q-2 6-.5 8.500 3 1 10.500 1.500z" fill="url(#gFold)" stroke="#bbb" stroke-width=".8"/>
   <text class="big" x="24" y="36.500" font-size="29" text-anchor="middle" fill="#fff" opacity=".35">${letter}</text>
   <text class="big" x="24" y="35.500" font-size="29" text-anchor="middle" fill="${ink}">${letter}</text>`);

const art = {
  folder: svg(use('folder')),
  zip: archive('zip', 16.5),
  rar: archive('rar', 16),
  targz: archive('tar.gz', 33),
  tarbz: archive('tar.bz2', 39),
  zipsel: svg(use('boxsel') + label('zip', 16.5, 'ext ext-sel')),
  code: svg(`${use('page')}<g fill="none" stroke-width="1.800"><path d="M16.500 18l-5 7 5 7M31.500 18l5 7-5 7" stroke="#b0b0b0"/><path d="M26.500 18l-5 14" stroke="#8a8a8a"/></g>`),
  text: svg(use('page') + use('lines')),
  script: svg(`${use('page')}<g stroke-width=".9"><path d="M11 7.500h16M11 9.500h18M11 11.500h9M11 13.500h7M20 18.500h8M20 25.500h7M20 27.500h11M20 29.500h11M20 31.500h12M22 38.500h14" stroke="#6f9dbb"/><path d="M11 16.500h9M11 18.500h8M16 34.500h19M14 36.500h18" stroke="#c98ab8"/><path d="M11 21.500h5M11 23.500h1M11 25.500h5M11 27.500h4M11 29.500h5M11 31.500h5" stroke="#93b987"/><path d="M11 38.500h4" stroke="#d33"/></g>`),
  doc: office('gDoc', '#3f6f8a', '#3c5565', 'W'),
  xls: office('gXls', '#4f8540', '#465f39', 'X'),
  exe: svg(`<g transform="translate(0 1)"><rect x="2.500" y="2.500" width="43" height="43" rx="2" fill="url(#gExe)" stroke="#8583c8"/>
    <path d="M9 24l7-7h22l-8 7v15H9z" fill="#0a0ad2" stroke="#000"/><path d="M9 24h21v15H9z" fill="#0000f0" stroke="#000"/><path d="M30 24l8-7v14l-8 8z" fill="#00007c" stroke="#000"/>
    <path d="M8 8.500h21v4H14l3 5M29 10l9 7H17l-4-5h16z" fill="#0000e2" stroke="#000"/><path d="M9 24h21M30 24l8-7" stroke="#ddd"/><path d="M12 28l5-2 2 2 6-1-1 5 2 3-5 2-4-1-3 1-1-4z" fill="#eee" stroke="#000" stroke-width=".6"/>
    <rect x="29" y="38.500" width="19" height="8.500" rx="1.500" fill="#2b2b45"/><text x="38.500" y="45.500" font-family="DejaVu Sans Mono" font-weight="700" font-size="7" text-anchor="middle" fill="#fff">7.27</text></g>`),
  pdf: `<svg class="thumb" width="56" height="70" viewBox="0 -.8 56 70"><rect x="1" y=".2" width="53.500" height="68.500" rx="2.500" fill="#fff" stroke="#b5b5b5" stroke-width="1.100"/>
    <g transform="translate(0 -1)"><path d="M16 10.500h23M18 14.500h20" stroke="#8a8a8a" stroke-dasharray="2 .6 1 .5"/><circle cx="23.500" cy="23" r="3" fill="#4d93c8" stroke="#285b8a" stroke-width=".6"/><circle cx="32.500" cy="23" r="2.800" fill="#c6ced8" stroke="#6d7b8a" stroke-width=".6"/><circle cx="32.500" cy="23" r="1" fill="#fff"/>
    <path d="M39 30.500h7M31 32.500h15M29 46.500h9" stroke="#b5b5b5" stroke-dasharray="2 .5"/><path d="M29 34.500h17" stroke="#8d8df0"/><path d="M15 43.500h27" stroke="#a5a5a5" stroke-dasharray="1 1.500 3 .5"/></g></svg>`,
};

const rows = [
  [['folder', ['oscom-site-search-', 126], ['GwZBw-6aC7k', 93]],
   ['folder', ['oscom-vietnamese-', 130], ['language-pack-', 101], ['NJmn8-Z8GwL', 96]],
   ['folder', ['oscom-tawk-to-live-', 132], ['chat-tUO7I-7nNkm', 124]],
   ['folder', ['email', 37]], ['folder', ['1412576', 55]], ['folder', ['android-studio', 100]], ['folder', ['XPath Helper', 87]]],
  [['folder', ['jdk1.8.0_131', 84]], ['code', ['catalog.php', 79]],
   ['zip', ['oscom-theme-', 96], ['switcher-xy9vz-', 101], ['eyyA0.zip', 63]],
   ['zip', ['oscom-site-search-', 126], ['GwZBw-6aC7k.zip', 117]],
   ['zipsel', ['oscom-vietnamese-', 130], ['language-pack-', 101], ['NJmn8-Z8GwL.zip', 119]],
   ['zip', ['oscom-vietnamese-', 130], ['language-pack-full-', 127], ['edition-l4a5f-WV…', 127]],
   ['code', ['vietnam.php', 83]]],
  [['zip', ['oscommerce-2.3.4', 122], ['(1).zip', 41]], ['zip', ['v2.zip', 38]],
   ['zip', ['oscom-tawk-to-live-', 132], ['chat-tUO7I-7nNkm.', 127], ['zip', 20]],
   ['zip', ['HuongdanThuchanh-', 135], ['2.zip', 31]],
   ['doc', ['56_CAU_HI_T_LUN_', 131], ['VA_DAP_AN_MON_', 132], ['TTHCM.doc', 77]],
   ['zip', ['bootstrap-select-', 116], ['1.12.2.zip', 63]], ['xls', ['kmartmainbulk.xlsx', 133]]],
  [['xls', ['ca4QXedxj8mrvuSw', 133], ['P-Amazon_', 76], ['1496655735877.xlsx', 134]],
   ['zip', ['oscommerce-2.3.4.', 126], ['zip', 20]], ['rar', ['FMO.rar', 56]],
   ['targz', ['pia-v69-installer-', 111], ['linux.tar.gz', 74]],
   ['zip', ['android-studio-ide-', 129], ['162.3871768-linux', 125], ['(1).zip', 41]],
   ['targz', ['jdk-8u131-linux-x64.', 132], ['tar.gz', 37]], ['text', ['test-sales-data.csv', 124]]],
  [['zip', ['1412576.zip', 78]], ['doc', ['1412576.doc', 84]],
   ['script', ['pia-v69-installer-', 111], ['linux.sh', 51]],
   ['zip', ['landing-', 53], ['gogolistassist.zip', 117]], ['zip', ['XPath Helper.zip', 110]], ['text', ['acc.txt', 45]],
   ['tarbz', ['FileZilla_3.25.0_', 105], ['x86_64-linux-gnu.', 114], ['tar.bz2', 46]]],
  [['exe', ['BvSshClient-Inst.exe', 134]], ['pdf', ['DSLK.pdf', 62]], ['text', ['backup-price', 87]],
   ['text', ['locations_script.sql', 132]], ['zip', ['ggdrive-js.zip', 88]], ['zip', ['1412576_!.zip', 89]],
   ['zip', ['inspinia-master.zip', 126]]],
  [['rar'], ['zip'], ['code'], ['code']],
];

document.getElementById('files').innerHTML = rows.map((row, i) =>
  `<div class="row${i === 5 ? ' tall' : ''}">` + row.map(([kind, ...lines]) =>
    `<div class="file"><div class="art">${art[kind]}</div><div class="name${kind === 'zipsel' ? ' sel' : ''}">` +
    lines.map(([text, w]) => `<span data-w="${w}">${text}</span>`).join('') +
    '</div></div>').join('') + '</div>').join('');

// Track each label so that it fills its set width.
document.querySelectorAll('[data-w]').forEach((el) => {
  const target = Number(el.dataset.w) + 0.5;
  const gap = (target - el.getBoundingClientRect().width) / el.textContent.length;
  el.style.letterSpacing = gap.toFixed(3) + 'px';
});
```
